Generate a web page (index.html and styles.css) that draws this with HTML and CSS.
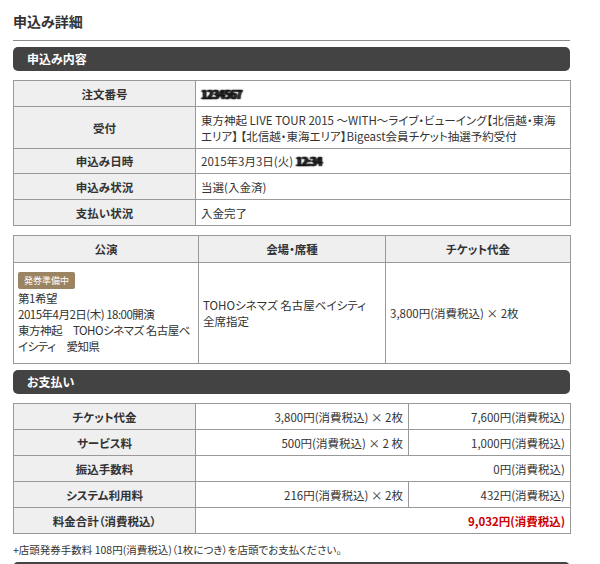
FILE: index.html
```html
<!DOCTYPE html>
<html lang="ja">
<head>
<meta charset="utf-8">
<link rel="stylesheet" href="styles.css">
</head>
<body>
<div class="page">
  <h1 class="title">申込み詳細</h1>
  <div class="bar">申込み内容</div>
  <table class="tbl info">
    <tr class="r26"><th>注文番号</th><td><span class="mask">1234567</span></td></tr>
    <tr class="tall"><th>受付</th><td>東方神起 LIVE TOUR 2015 ～WITH～ライブ・ビューイング【北信越・東海エリア】 【北信越・東海エリア】Bigeast会員チケット抽選予約受付</td></tr>
    <tr class="r25"><th>申込み日時</th><td>2015年3月3日(火) <span class="mask">12:34</span></td></tr>
    <tr class="r26"><th>申込み状況</th><td>当選(入金済)</td></tr>
    <tr class="r26"><th>支払い状況</th><td>入金完了</td></tr>
  </table>
  <table class="tbl perf">
    <tr class="head"><th>公演</th><th>会場・席種</th><th>チケット代金</th></tr>
    <tr class="body">
      <td class="perf-cell"><span class="badge">発券準備中</span><br>第1希望<br>2015年4月2日(木) 18:00開演<br>東方神起　TOHOシネマズ 名古屋ベ<br>イシティ　愛知県</td>
      <td>TOHOシネマズ 名古屋ベイシティ<br>全席指定</td>
      <td>3,800円(消費税込) × 2枚</td>
    </tr>
  </table>
  <div class="bar">お支払い</div>
  <table class="tbl pay">
    <tr><th>チケット代金</th><td class="num">3,800円(消費税込) × 2枚</td><td class="num">7,600円(消費税込)</td></tr>
    <tr><th>サービス料</th><td class="num">500円(消費税込) × 2 枚</td><td class="num">1,000円(消費税込)</td></tr>
    <tr><th>振込手数料</th><td class="num" colspan="2">0円(消費税込)</td></tr>
    <tr><th>システム利用料</th><td class="num">216円(消費税込) × 2枚</td><td class="num">432円(消費税込)</td></tr>
    <tr><th>料金合計（消費税込）</th><td class="num total" colspan="2">9,032円(消費税込)</td></tr>
  </table>
  <p class="note">+店頭発券手数料 108円(消費税込)（1枚につき）を店頭でお支払ください。</p>
  <div class="bar"></div>
</div>
</body>
</html>
```
FILE: styles.css
```css
html, body {
  margin: 0;
  padding: 0;
  background: #fff;
}
body {
  font-family: "Noto Sans CJK JP", "Noto Sans", sans-serif;
  font-size: 11.5px;
  font-feature-settings: "palt";
  color: #333;
  overflow: hidden;
}
.page {
  width: 557px;
  padding: 12px 0 0 13px;
}
.title {
  margin: 0;
  font-size: 14px;
  font-weight: bold;
  line-height: 18px;
  padding-bottom: 10px;
  border-bottom: 1px solid #8c8c8c;
  color: #333;
}
.bar {
  margin-top: 6px;
  height: 24px;
  line-height: 24px;
  background: #434343;
  border-radius: 5px;
  color: #fff;
  font-weight: bold;
  font-size: 12px;
  padding-left: 14px;
}
.tbl {
  width: 558px;
  border-collapse: collapse;
  margin-top: 9px;
  table-layout: fixed;
}
.tbl th, .tbl td {
  border: 1px solid #999;
  line-height: 16px;
  padding: 4px 5px 4px;
  vertical-align: middle;
}
.tbl th {
  background: #efefef;
  font-weight: bold;
  text-align: center;
  color: #333;
}
.info th { width: 171px; }
.info tr.r26 { height: 26px; }
.info tr.r25 { height: 25px; }
.info tr.tall { height: 42px; }
.mask {
  font-weight: bold;
  color: transparent;
  letter-spacing: -1px;
  text-shadow: 0 0 1.5px #111, 1px 0 1px #222, -1px 0 1px #222;
}
.perf { margin-top: 9px; }
.perf tr.head { height: 27px; }
.perf tr.head th:nth-child(1) { width: 174px; }
.perf tr.head th:nth-child(2) { width: 176px; }
.perf tr.body { height: 101px; }
.perf td { padding: 4px 6px 5px 4px; }
.perf-cell {
  white-space: nowrap;
  letter-spacing: -0.5px;
}
.badge {
  display: inline-block;
  background: #9b8461;
  color: #fff;
  font-size: 9px;
  line-height: 17px;
  padding: 0 6px;
  border-radius: 2px;
  margin-bottom: 1px;
  letter-spacing: 0;
}
.pay { margin-top: 9px; }
.pay tr { height: 26px; }
.pay th { width: 171px; }
.pay td:nth-child(2) { width: 202px; }
.num { text-align: right; }
.total {
  color: #cc0000;
  font-weight: bold;
}
.note {
  margin: 8px 0 0;
  font-size: 10.5px;
  line-height: 15px;
}
.note + .bar { margin-top: 5px; }
```
